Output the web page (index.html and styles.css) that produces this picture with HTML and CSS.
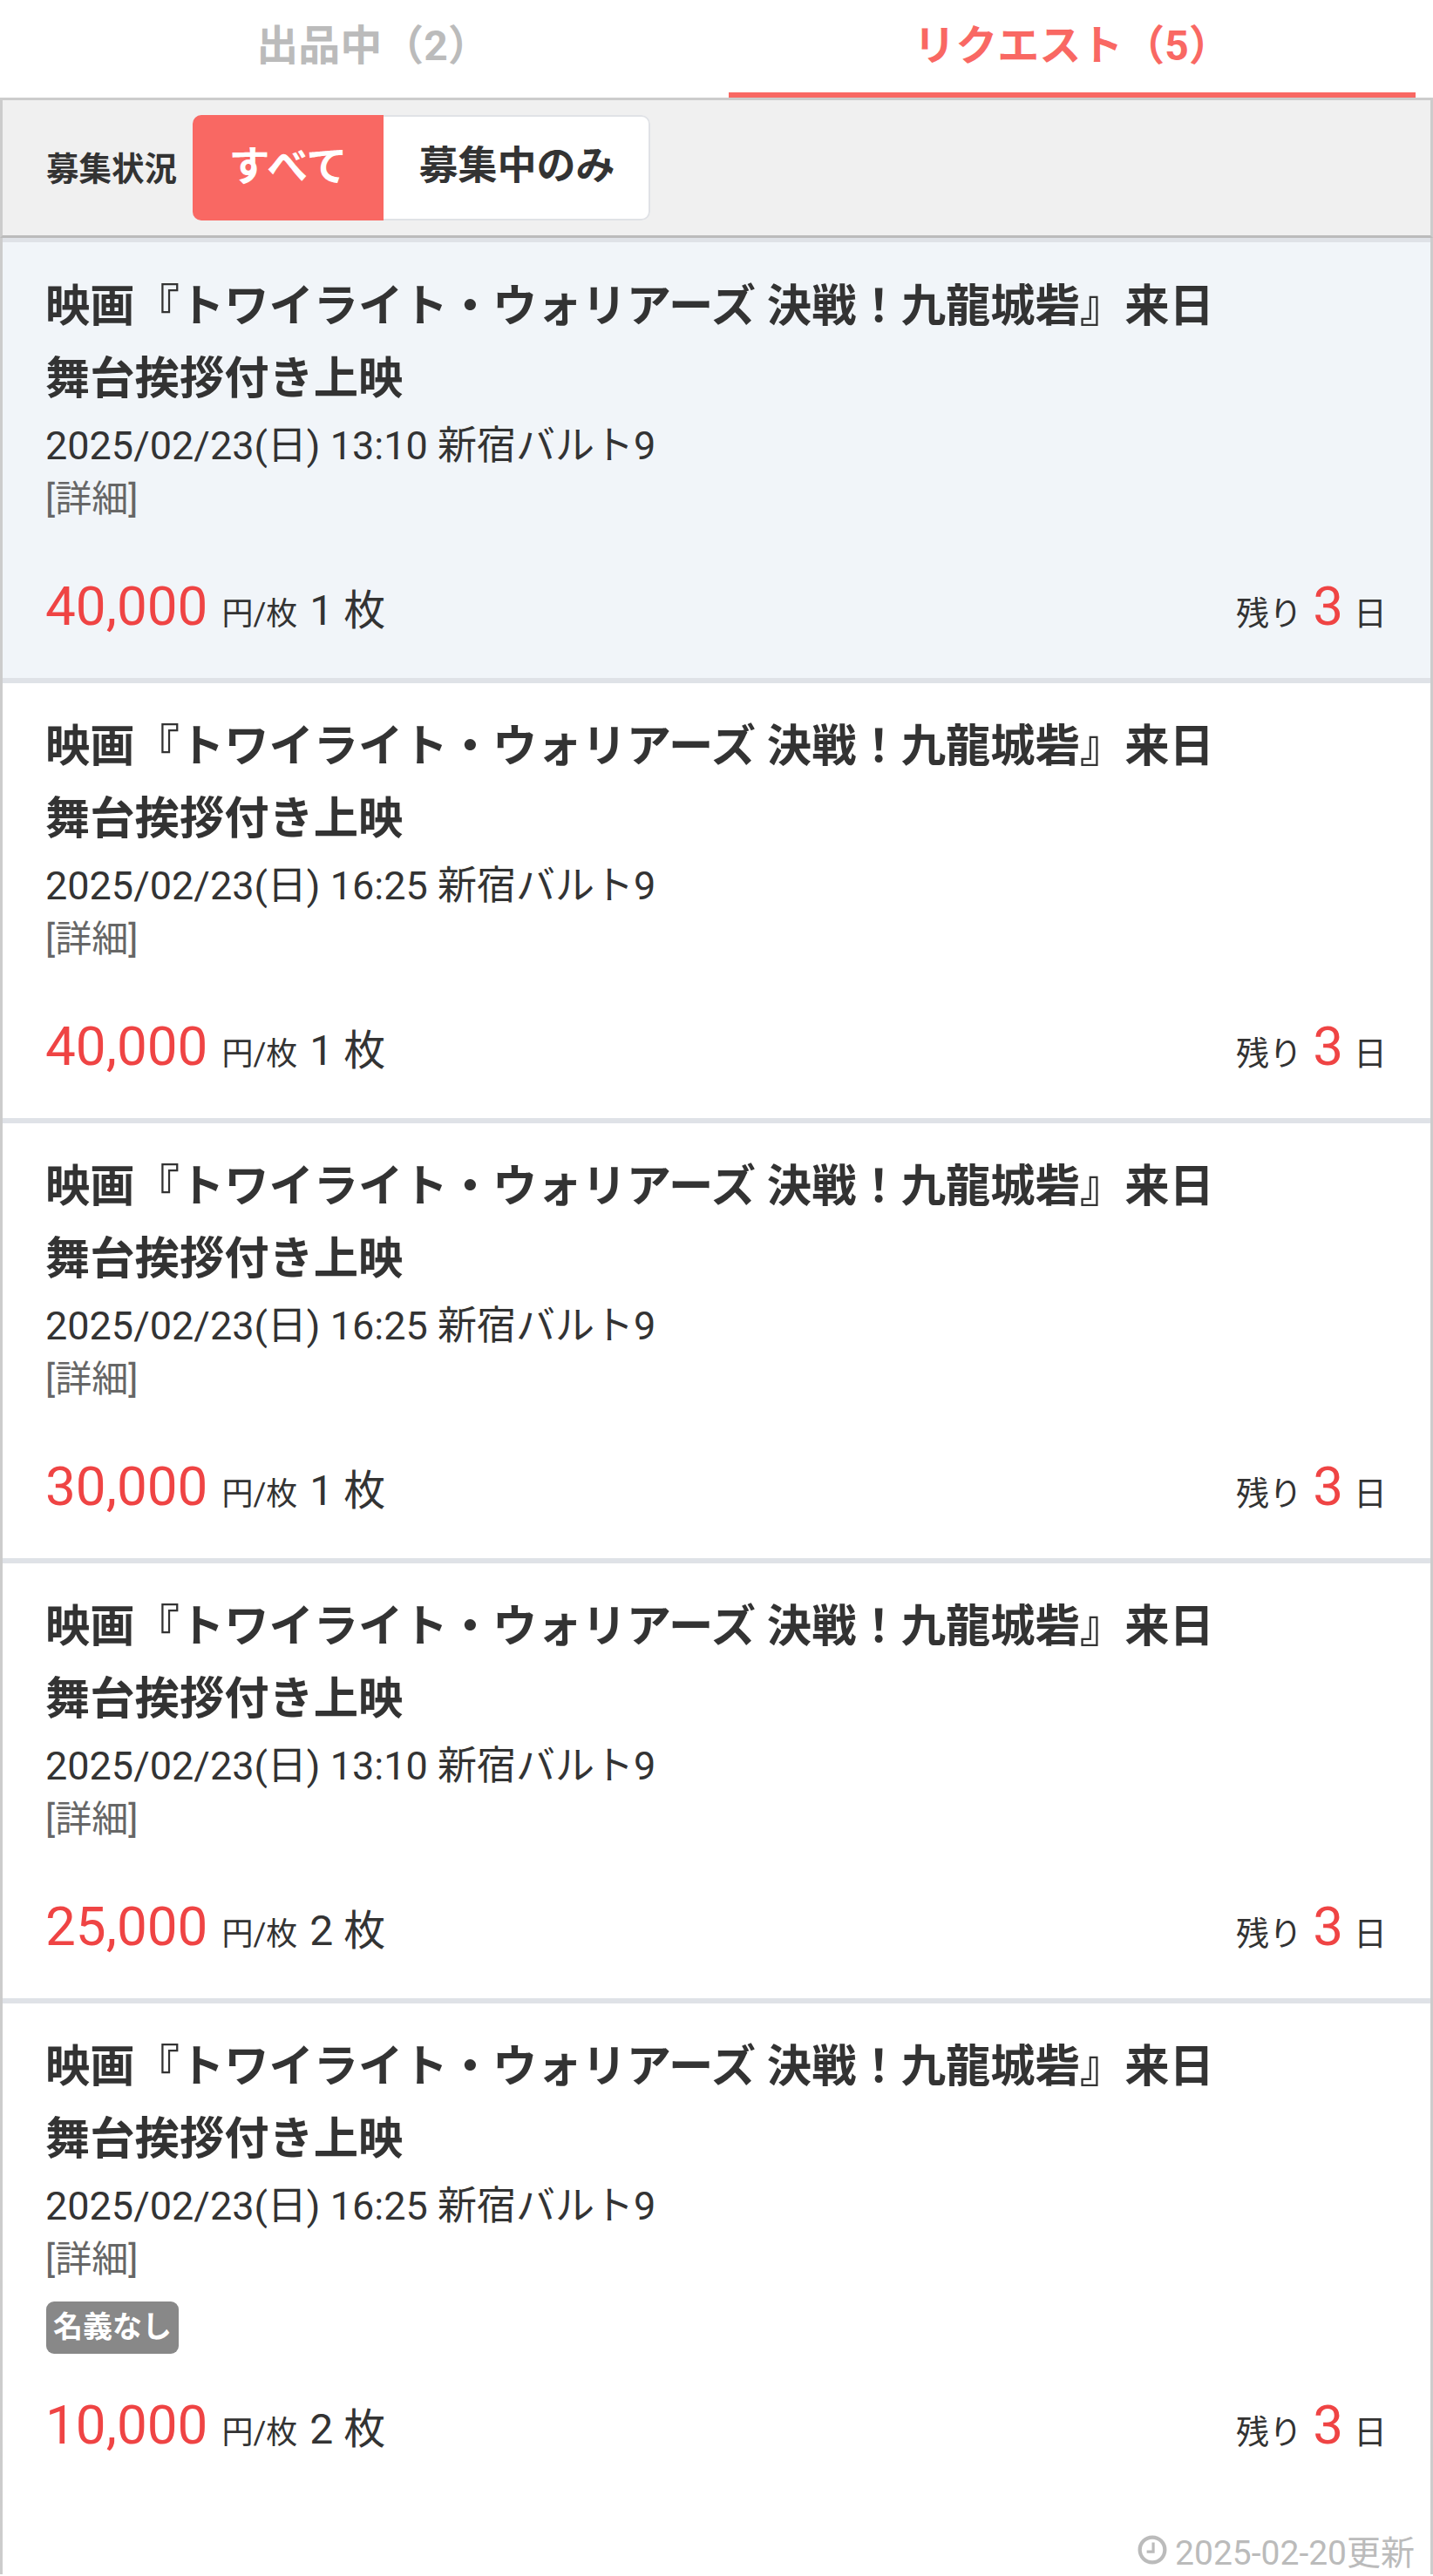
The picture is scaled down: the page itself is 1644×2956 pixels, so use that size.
FILE: index.html
```html
<!DOCTYPE html>
<html lang="ja">
<head>
  <meta charset="utf-8">
  <title>リクエスト一覧</title>
  <link rel="stylesheet" href="styles.css">
</head>
<body>
  <nav class="tabs">
    <a class="tab">出品中（2）</a>
    <a class="tab active">リクエスト（5）</a>
  </nav>

  <div class="content">
    <div class="filter">
      <span class="filter-label">募集状況</span>
      <div class="segment">
        <span class="segment-item on">すべて</span>
        <span class="segment-item">募集中のみ</span>
      </div>
    </div>

    <div class="card current">
      <h2 class="card-title">映画『トワイライト・ウォリアーズ 決戦！九龍城砦』来日舞台挨拶付き上映</h2>
      <p class="card-date">2025/02/23(日) 13:10 新宿バルト9</p>
      <p class="card-detail">[詳細]</p>
      <div class="card-foot">
        <div><span class="price">40,000</span><span class="unit">円/枚</span><span class="qty">1 枚</span></div>
        <div class="remain">残り<span class="days">3</span>日</div>
      </div>
    </div>

    <div class="card">
      <h2 class="card-title">映画『トワイライト・ウォリアーズ 決戦！九龍城砦』来日舞台挨拶付き上映</h2>
      <p class="card-date">2025/02/23(日) 16:25 新宿バルト9</p>
      <p class="card-detail">[詳細]</p>
      <div class="card-foot">
        <div><span class="price">40,000</span><span class="unit">円/枚</span><span class="qty">1 枚</span></div>
        <div class="remain">残り<span class="days">3</span>日</div>
      </div>
    </div>

    <div class="card">
      <h2 class="card-title">映画『トワイライト・ウォリアーズ 決戦！九龍城砦』来日舞台挨拶付き上映</h2>
      <p class="card-date">2025/02/23(日) 16:25 新宿バルト9</p>
      <p class="card-detail">[詳細]</p>
      <div class="card-foot">
        <div><span class="price">30,000</span><span class="unit">円/枚</span><span class="qty">1 枚</span></div>
        <div class="remain">残り<span class="days">3</span>日</div>
      </div>
    </div>

    <div class="card">
      <h2 class="card-title">映画『トワイライト・ウォリアーズ 決戦！九龍城砦』来日舞台挨拶付き上映</h2>
      <p class="card-date">2025/02/23(日) 13:10 新宿バルト9</p>
      <p class="card-detail">[詳細]</p>
      <div class="card-foot">
        <div><span class="price">25,000</span><span class="unit">円/枚</span><span class="qty">2 枚</span></div>
        <div class="remain">残り<span class="days">3</span>日</div>
      </div>
    </div>

    <div class="card last">
      <h2 class="card-title">映画『トワイライト・ウォリアーズ 決戦！九龍城砦』来日舞台挨拶付き上映</h2>
      <p class="card-date">2025/02/23(日) 16:25 新宿バルト9</p>
      <p class="card-detail">[詳細]</p>
      <span class="badge">名義なし</span>
      <div class="card-foot">
        <div><span class="price">10,000</span><span class="unit">円/枚</span><span class="qty">2 枚</span></div>
        <div class="remain">残り<span class="days">3</span>日</div>
      </div>
    </div>

    <div class="updated">
      <!-- clock -->
      <svg class="clock" viewBox="0 0 32 32" fill="none" stroke="#bbb">
        <circle cx="16" cy="16" r="13.5" stroke-width="4"/>
        <path d="M17 8V18H10" stroke-width="3"/>
      </svg>
      <span>2025-02-20更新</span>
    </div>
  </div>
</body>
</html>
```

FILE: styles.css
```css
* {
  box-sizing: border-box;
}
body {
  margin: 0;
  font-family: Roboto, "Noto Sans CJK JP", sans-serif;
  color: #333;
  background: #fff;
}
.tabs {
  display: flex;
  height: 112px;
  padding: 0 20px;
}
.tab {
  flex: 1;
  height: 112px;
  line-height: 106px;
  margin-left: 14px;
  text-align: center;
  font-size: 48px;
  font-weight: 700;
  color: #bbb;
}
.tab.active {
  color: #f96863;
  border-bottom: 6px solid #f96863;
}
.content {
  border-left: 3px solid #ccc;
  border-right: 3px solid #ccc;
}
.filter {
  display: flex;
  align-items: center;
  height: 161px;
  padding-left: 50px;
  background: #f0f0f0;
  border-top: 3px solid #ccc;
  border-bottom: 3px solid #bbb;
  margin: 0 -3px;
  border-left: 3px solid #ccc;
  border-right: 3px solid #ccc;
}
.filter-label {
  width: 168px;
  padding-bottom: 4px;
  font-size: 37.5px;
  font-weight: 700;
}
.segment {
  display: flex;
  height: 121px;
  border-radius: 10px;
  background: #fff;
  box-shadow: 0 0 0 2px #e0e2e6 inset;
}
.segment-item {
  width: 306px;
  line-height: 118px;
  text-align: center;
  font-size: 45px;
  font-weight: 700;
}
.segment-item.on {
  width: 219px;
  font-size: 47px;
  color: #fff;
  background: #f96863;
  border-radius: 10px 0 0 10px;
}
.card {
  height: 505px;
  padding: 31px 50px 0 49px;
  border-bottom: 6px solid #dfe2e7;
  display: flex;
  flex-direction: column;
}
.card.current {
  height: 511px;
  padding-top: 32px;
  border-top: 5px solid #dfe2e7;
  background: #f1f5f9;
}
.card.last {
  height: 599px;
  border-bottom: 0;
}
.card-title {
  margin: 0;
  max-width: 1360px;
  font-size: 51.3px;
  line-height: 83px;
  font-weight: 700;
}
.card-date {
  margin: 6px 0 0;
  font-size: 45px;
  line-height: 60px;
}
.card-detail {
  margin: 0;
  font-size: 42px;
  line-height: 62px;
  color: #666;
}
.badge {
  align-self: flex-start;
  margin-top: 17px;
  margin-left: 1px;
  padding: 0 8px;
  height: 60px;
  line-height: 58px;
  font-size: 34px;
  font-weight: 700;
  color: #fff;
  background: #888;
  border-radius: 9px;
}
.card-foot {
  display: flex;
  justify-content: space-between;
  align-items: baseline;
  margin-top: 55px;
}
.card.last .card-foot {
  margin-top: 45px;
}
.price {
  font-size: 62px;
  color: #ef4444;
}
.unit {
  margin-left: 16px;
  font-size: 36px;
}
.qty {
  margin-left: 14px;
  font-size: 48px;
}
.remain {
  font-size: 38px;
}
.days {
  font-size: 62px;
  margin: 0 12px;
  color: #ef4444;
}
.updated {
  display: flex;
  justify-content: flex-end;
  align-items: center;
  gap: 9px;
  padding-right: 18px;
  font-size: 39px;
  color: #bbb;
}
.clock {
  width: 34px;
  height: 34px;
}
```
